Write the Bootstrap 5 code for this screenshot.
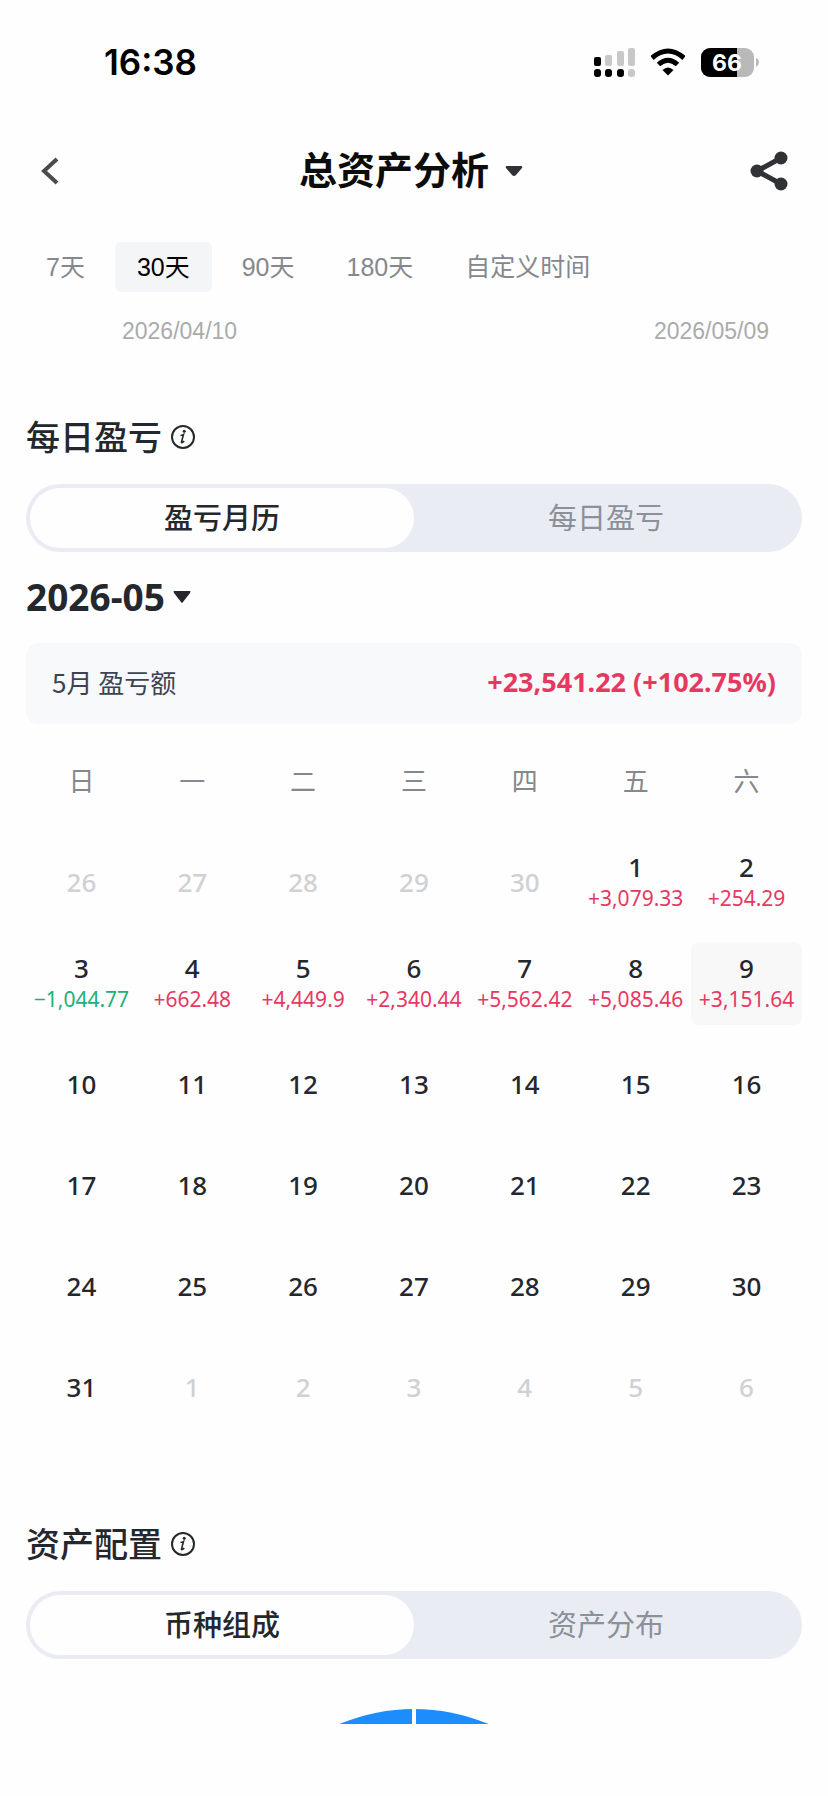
<!DOCTYPE html>
<html lang="zh-CN">
<head>
<meta charset="utf-8">
<meta name="viewport" content="width=device-width, initial-scale=1">
<title>总资产分析</title>
<link href="https://cdn.jsdelivr.net/npm/bootstrap@5.3.0/dist/css/bootstrap.min.css" rel="stylesheet">
<style>
  body { font-family: "Noto Sans", "Noto Sans CJK SC", sans-serif; color: #24272c; background: #fefefe; }
  button { border: 0; background: none; padding: 0; color: inherit; }
  svg { display: block; flex: none; }

  .status-bar { height: 124px; padding: 0 69px 0 104px; }
  .clock { font: 600 35px/44px Inter, sans-serif; color: #000; }
  .battery-text { font: 700 23px Inter, sans-serif; }

  .title-bar { height: 94px; padding: 0 40px; }
  .page-title { font-size: 38px; line-height: 44px; font-weight: 700; color: #0c0c0d; padding: 0 8px 4px 0; }

  .range-tabs { padding: 24px 24px 0; gap: 8px; }
  .range-tab { font: 400 25px/50px "Liberation Sans", "Noto Sans CJK SC", sans-serif; color: #85888c; padding: 0 22px; border-radius: 6px; }
  .range-tab.active { background: #f4f5f7; color: #000; }
  .range-dates { font: 400 23px/28px "Liberation Sans", sans-serif; color: #aaabad; padding: 25px 59px 0 122px; }

  .panel { padding: 0 26px; }
  .panel-title { font-size: 34px; line-height: 44px; font-weight: 500; }
  .profit-panel { margin-top: 70px; }
  .allocation-panel { margin-top: 84px; }

  .segment { margin-top: 25px; height: 68px; padding: 4px; border-radius: 34px; background: #eaecf3; }
  .segment button { flex: 1 1 0; border-radius: 30px; font-size: 29px; line-height: 60px; color: #8b9099; }
  .segment .active { background: #fefefe; color: #24272c; font-weight: 500; }

  .month { margin-top: 22px; font-size: 37px; line-height: 46px; font-weight: 700; }
  .summary { margin-top: 23px; padding: 0 26px 4px; border-radius: 12px; background: #f8f9fb; font-size: 26px; line-height: 77px; }
  .summary-label { color: #3c4352; font-family: "Noto Sans CJK SC", sans-serif; }
  .summary-value { font-weight: 700; font-size: 27px; color: #e63962; }

  .calendar { table-layout: fixed; width: 100%; margin-top: 6px; text-align: center; }
  .calendar th { height: 102px; font-size: 26px; font-weight: 400; color: #85888c; }
  .calendar td { height: 101px; padding: 0; }
  .day { width: 100%; height: 83px; border-radius: 8px; font-size: 26px; line-height: 31px; font-weight: 500; white-space: nowrap; }
  .day small { display: block; font-size: 21px; line-height: 31px; font-weight: 400; color: #e63962; }
  .day .loss { color: #1fae7c; }
  .day.today { background: #f8f8f9; }
  .day.other { color: #cfd1d5; }

  .chart { margin: 50px 0 72px; }
</style>
</head>
<body>
<header>
  <div class="status-bar d-flex align-items-center justify-content-between">
    <span class="clock">16:38</span>
    <div class="d-flex align-items-center gap-3">
      <svg width="41" height="30" viewBox="0 0 41 30" aria-hidden="true">
        <g fill="#000"><rect x="0" y="10" width="7" height="9" rx="2"/><rect x="0" y="22" width="7" height="8" rx="3"/><rect x="11" y="22" width="7" height="8" rx="3"/><rect x="23" y="22" width="7" height="8" rx="3"/></g>
        <g fill="#c8c8c8"><rect x="11" y="8" width="7" height="11" rx="2"/><rect x="23" y="4" width="7" height="15" rx="2"/><rect x="34" y="1" width="7" height="18" rx="2"/><rect x="34" y="22" width="7" height="8" rx="3"/></g>
      </svg>
      <svg width="34" height="28" viewBox="1 0 34 28" aria-hidden="true">
        <path d="M2 10Q18-4 34 10" fill="none" stroke="#000" stroke-width="5"/>
        <path d="M8.500 16.500Q18 8 27.500 16.500" fill="none" stroke="#000" stroke-width="5"/>
        <path d="M12.500 22Q18 17 23.500 22L18 27.500Z" fill="#000"/>
      </svg>
      <svg width="58" height="30" viewBox="0 0 58 30" role="img" aria-label="电量 66%">
        <defs><clipPath id="cell"><rect y="1" width="53" height="29" rx="9"/></clipPath></defs>
        <g clip-path="url(#cell)"><path fill="#b9b9b9" d="M0 0h53v30H0z"/><path fill="#000" d="M0 0h36v30H0z"/></g>
        <path fill="#b9b9b9" d="M55 11q3 1 3 4t-3 5z"/>
        <text class="battery-text" x="26" y="24" text-anchor="middle" fill="#fff">66</text>
      </svg>
    </div>
  </div>
  <nav class="title-bar d-flex align-items-center justify-content-between" aria-label="页面导航">
    <button type="button" aria-label="返回">
      <svg width="40" height="30" viewBox="0 0 40 30"><path d="M17 3L4 15l13 12" fill="none" stroke="#4a4b4e" stroke-width="4"/></svg>
    </button>
    <button type="button" class="page-title d-flex align-items-center">总资产分析
      <svg class="ms-3 mt-1" width="18" height="12" viewBox="0 0 18 12"><path d="M2 1h14q2 0 1 2l-6 7q-2 2-4 0L1 3q-1-2 1-2z" fill="#303236"/></svg>
    </button>
    <button type="button" aria-label="分享">
      <svg width="38" height="42" viewBox="1 0 38 42"><path d="M32 8L8 21l24 13" fill="none" stroke="#303236" stroke-width="5"/><g fill="#303236"><circle cx="32" cy="8" r="6.500"/><circle cx="8" cy="21" r="6.500"/><circle cx="32" cy="34" r="6.500"/></g></svg>
    </button>
  </nav>
</header>

<main>
  <div class="range-tabs d-flex">
    <button type="button" class="range-tab">7天</button>
    <button type="button" class="range-tab active" aria-pressed="true">30天</button>
    <button type="button" class="range-tab">90天</button>
    <button type="button" class="range-tab">180天</button>
    <button type="button" class="range-tab">自定义时间</button>
  </div>
  <div class="range-dates d-flex justify-content-between"><span>2026/04/10</span><span>2026/05/09</span></div>

  <section class="panel profit-panel">
    <div class="d-flex align-items-center gap-2">
      <h2 class="panel-title m-0">每日盈亏</h2>
      <button type="button" aria-label="每日盈亏说明">
        <svg width="26" height="26" viewBox="0 0 26 26"><circle cx="13" cy="13" r="11" fill="none" stroke="#24272c" stroke-width="2"/><circle cx="14.200" cy="7.200" r="1.500" fill="#24272c"/><path d="M10.500 11.500q2-.2 3-1l-2 7.500q0 1.500 2.800-.8" fill="none" stroke="#24272c" stroke-width="1.600"/></svg>
      </button>
    </div>
    <div class="segment d-flex">
      <button type="button" class="active" aria-pressed="true">盈亏月历</button>
      <button type="button">每日盈亏</button>
    </div>
    <button type="button" class="month d-flex align-items-center gap-2">2026-05
      <svg width="18" height="14" viewBox="0 0 18 14"><path d="M1 1h16q1 0 0 2l-7 9q-1 2-2 0L1 3q-1-2 0-2z" fill="#24272c"/></svg>
    </button>
    <div class="summary d-flex justify-content-between">
      <span class="summary-label">5月 盈亏额</span>
      <span class="summary-value">+23,541.22 (+102.75%)</span>
    </div>
    <table class="calendar">
      <thead>
        <tr><th scope="col">日</th><th scope="col">一</th><th scope="col">二</th><th scope="col">三</th><th scope="col">四</th><th scope="col">五</th><th scope="col">六</th></tr>
      </thead>
      <tbody>
        <tr>
          <td><button type="button" class="day other">26</button></td>
          <td><button type="button" class="day other">27</button></td>
          <td><button type="button" class="day other">28</button></td>
          <td><button type="button" class="day other">29</button></td>
          <td><button type="button" class="day other">30</button></td>
          <td><button type="button" class="day">1<small>+3,079.33</small></button></td>
          <td><button type="button" class="day">2<small>+254.29</small></button></td>
        </tr>
        <tr>
          <td><button type="button" class="day">3<small class="loss">−1,044.77</small></button></td>
          <td><button type="button" class="day">4<small>+662.48</small></button></td>
          <td><button type="button" class="day">5<small>+4,449.9</small></button></td>
          <td><button type="button" class="day">6<small>+2,340.44</small></button></td>
          <td><button type="button" class="day">7<small>+5,562.42</small></button></td>
          <td><button type="button" class="day">8<small>+5,085.46</small></button></td>
          <td><button type="button" class="day today" aria-current="date">9<small>+3,151.64</small></button></td>
        </tr>
        <tr>
          <td><button type="button" class="day">10</button></td>
          <td><button type="button" class="day">11</button></td>
          <td><button type="button" class="day">12</button></td>
          <td><button type="button" class="day">13</button></td>
          <td><button type="button" class="day">14</button></td>
          <td><button type="button" class="day">15</button></td>
          <td><button type="button" class="day">16</button></td>
        </tr>
        <tr>
          <td><button type="button" class="day">17</button></td>
          <td><button type="button" class="day">18</button></td>
          <td><button type="button" class="day">19</button></td>
          <td><button type="button" class="day">20</button></td>
          <td><button type="button" class="day">21</button></td>
          <td><button type="button" class="day">22</button></td>
          <td><button type="button" class="day">23</button></td>
        </tr>
        <tr>
          <td><button type="button" class="day">24</button></td>
          <td><button type="button" class="day">25</button></td>
          <td><button type="button" class="day">26</button></td>
          <td><button type="button" class="day">27</button></td>
          <td><button type="button" class="day">28</button></td>
          <td><button type="button" class="day">29</button></td>
          <td><button type="button" class="day">30</button></td>
        </tr>
        <tr>
          <td><button type="button" class="day">31</button></td>
          <td><button type="button" class="day other">1</button></td>
          <td><button type="button" class="day other">2</button></td>
          <td><button type="button" class="day other">3</button></td>
          <td><button type="button" class="day other">4</button></td>
          <td><button type="button" class="day other">5</button></td>
          <td><button type="button" class="day other">6</button></td>
        </tr>
      </tbody>
    </table>
  </section>

  <section class="panel allocation-panel">
    <div class="d-flex align-items-center gap-2">
      <h2 class="panel-title m-0">资产配置</h2>
      <button type="button" aria-label="资产配置说明">
        <svg width="26" height="26" viewBox="0 0 26 26"><circle cx="13" cy="13" r="11" fill="none" stroke="#24272c" stroke-width="2"/><circle cx="14.200" cy="7.200" r="1.500" fill="#24272c"/><path d="M10.500 11.500q2-.2 3-1l-2 7.500q0 1.500 2.800-.8" fill="none" stroke="#24272c" stroke-width="1.600"/></svg>
      </button>
    </div>
    <div class="segment d-flex">
      <button type="button" class="active" aria-pressed="true">币种组成</button>
      <button type="button">资产分布</button>
    </div>
    <!-- Top edge of the allocation ring, cut off by the bottom of the scroll area -->
    <div class="chart d-flex justify-content-center">
      <svg width="376" height="15" viewBox="0 0 376 15" role="img" aria-label="币种组成图"><circle cx="188" cy="192" r="192" fill="#1c8dfc"/><path d="M186 0h4v15h-4z" fill="#fefefe"/></svg>
    </div>
  </section>
</main>
<script src="https://cdn.jsdelivr.net/npm/bootstrap@5.3.0/dist/js/bootstrap.bundle.min.js"></script>
</body>
</html>
